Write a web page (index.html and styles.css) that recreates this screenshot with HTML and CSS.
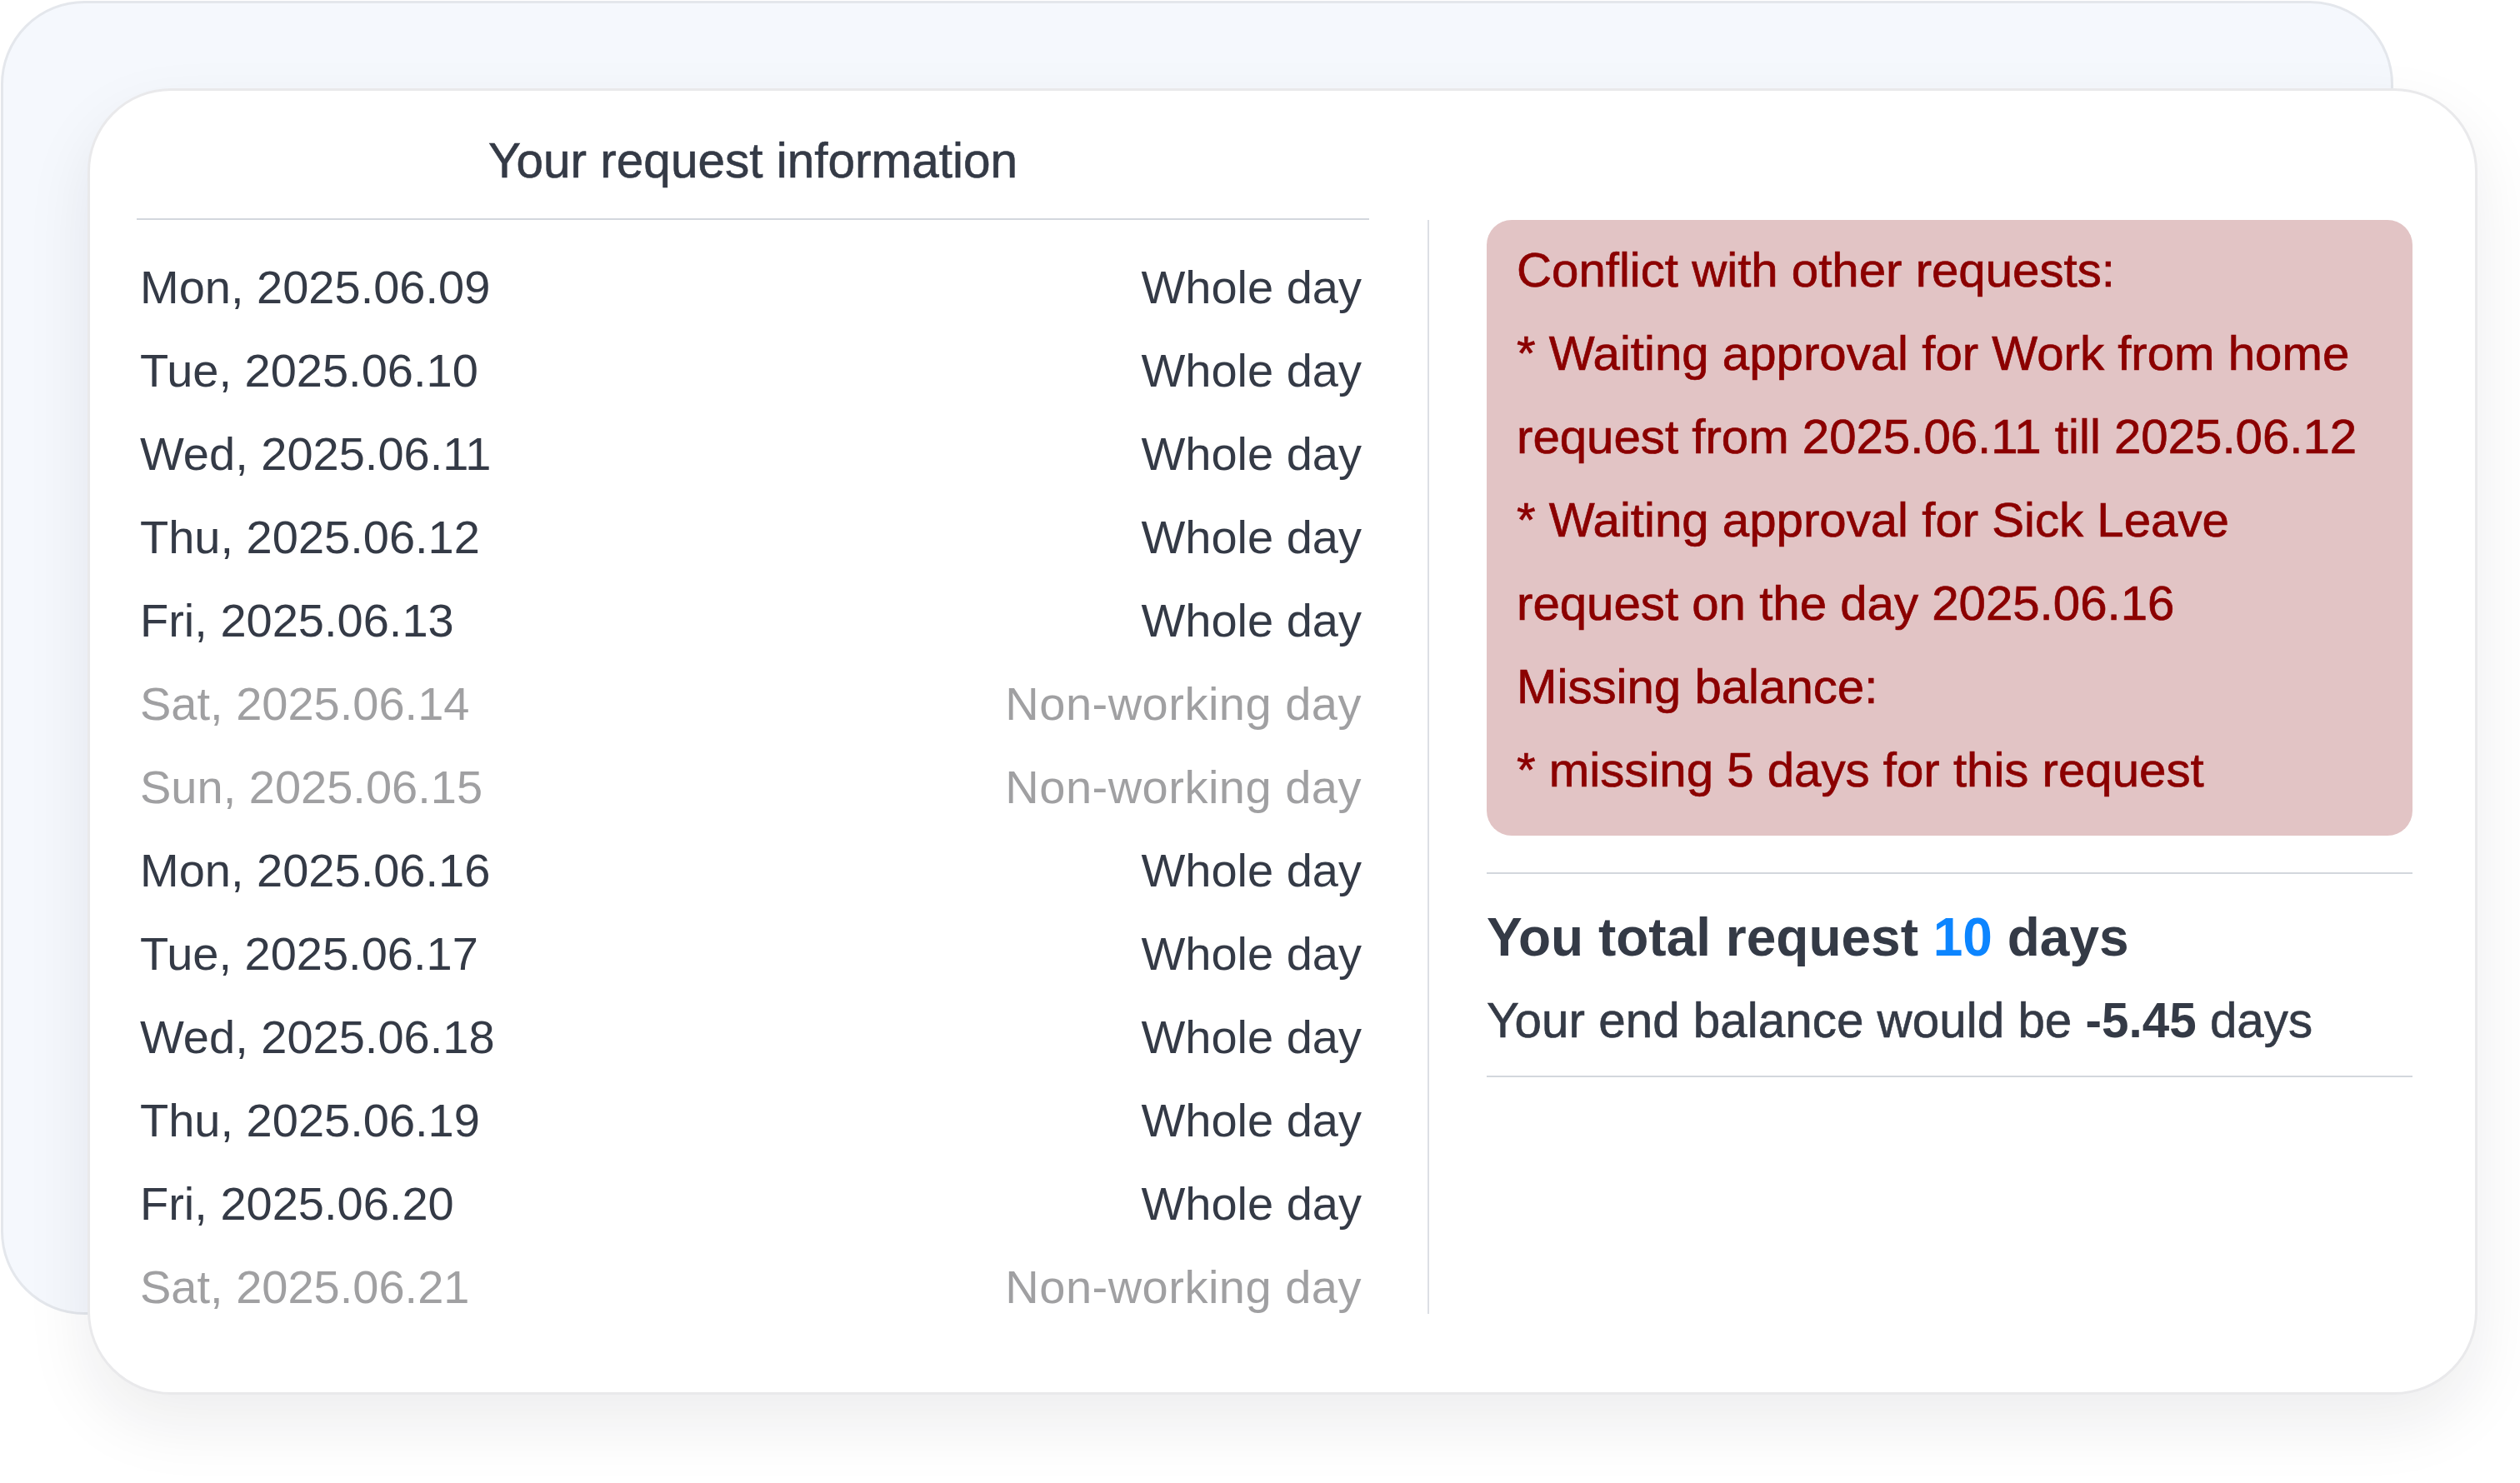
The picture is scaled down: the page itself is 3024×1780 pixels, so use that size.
FILE: index.html
```html
<!DOCTYPE html>
<html>
	<head>
		<meta charset="utf-8">
		<title>Request summary</title>
		<link rel="stylesheet" href="styles.css">
	</head>
	<body>
		<!-- two stacked cards, the white one lies over the blue one -->
		<div class="stack">
			<div class="back"></div>

			<div class="card">
				<div class="head">Your request information</div>

				<div class="body">
					<!-- list of the days in the request -->
					<ul class="days">
						<li class="day"><span>Mon, 2025.06.09</span><span>Whole day</span></li>
						<li class="day"><span>Tue, 2025.06.10</span><span>Whole day</span></li>
						<li class="day"><span>Wed, 2025.06.11</span><span>Whole day</span></li>
						<li class="day"><span>Thu, 2025.06.12</span><span>Whole day</span></li>
						<li class="day"><span>Fri, 2025.06.13</span><span>Whole day</span></li>
						<li class="day off"><span>Sat, 2025.06.14</span><span>Non-working day</span></li>
						<li class="day off"><span>Sun, 2025.06.15</span><span>Non-working day</span></li>
						<li class="day"><span>Mon, 2025.06.16</span><span>Whole day</span></li>
						<li class="day"><span>Tue, 2025.06.17</span><span>Whole day</span></li>
						<li class="day"><span>Wed, 2025.06.18</span><span>Whole day</span></li>
						<li class="day"><span>Thu, 2025.06.19</span><span>Whole day</span></li>
						<li class="day"><span>Fri, 2025.06.20</span><span>Whole day</span></li>
						<li class="day off"><span>Sat, 2025.06.21</span><span>Non-working day</span></li>
					</ul>

					<div class="rule"></div>

					<div class="side">
						<!-- warnings -->
						<div class="alert">
							<div>Conflict with other requests:</div>
							<div>* Waiting approval for Work from home request from 2025.06.11 till 2025.06.12</div>
							<div>* Waiting approval for Sick Leave request on the day 2025.06.16</div>
							<div>Missing balance:</div>
							<div>* missing 5 days for this request</div>
						</div>

						<div class="total">
							<div class="total-title">You total request <span class="num">10</span> days</div>
							<div class="total-balance">Your end balance would be <b>-5.45</b> days</div>
						</div>
					</div>
				</div>
			</div>
		</div>
	</body>
</html>
```

FILE: styles.css
```css
*{
	margin: 0;
	padding: 0;
	box-sizing: border-box;
}

body{
	background-color: #fff;
	font-family: "Liberation Sans", Arial, sans-serif;
	color: #343a46;
}

/* both cards sit in the same grid cell */
.stack{
	display: grid;
	align-items: start;
	/* room below for the card shadow */
	padding: 1px 0 106px 1px;
}
.back,
.card{
	grid-area: 1 / 1;
}

.back{
	width: 2871px;
	height: 1577px;
	background-color: #f5f8fd;
	border: 3px solid #e4e7ec;
	border-radius: 100px;
}

.card{
	/* moved down and right so it overlaps the blue card */
	margin: 105px 0 0 104px;
	width: 2868px;
	height: 1568px;
	background-color: #fff;
	border: 3px solid #e9e9eb;
	border-radius: 100px;
	box-shadow: 0 34px 80px rgba(20, 24, 40, 0.08);
	padding: 50px 75px 94px 56px;
	position: relative;
}

.head{
	width: 1479px;
	text-align: center;
	font-size: 58.5px;
	line-height: 68px;
	padding-bottom: 35px;
	border-bottom: 2px solid #d3d7dd;
	-webkit-text-stroke: 0.6px #343a46;
}

.body{
	display: flex;
}

/* days */
.days{
	list-style: none;
	flex: 0 0 1479px;
	padding: 49px 9px 0 4px;
	display: flex;
	flex-direction: column;
	gap: 36px;
}
.day{
	display: flex;
	justify-content: space-between;
	font-size: 56px;
	line-height: 64px;
}
.day.off{
	color: #a0a0a2;
}
.day.off span:last-child{
	letter-spacing: 0.5px;
}

.rule{
	flex: 0 0 2px;
	background-color: #dcdfe4;
	margin: 0 69px 0 70px;
}

.side{
	flex: 1;
}

/* red box */
.alert{
	background-color: #e2c4c5;
	color: #8b0000;
	border-radius: 30px;
	padding: 10px 40px 29px 36px;
	font-size: 58.2px;
	line-height: 100px;
	-webkit-text-stroke: 0.7px #8b0000;
}

.total{
	margin-top: 44px;
	border-top: 2px solid #d3d7dd;
	border-bottom: 2px solid #d3d7dd;
	padding: 40px 0 34px;
}
.total-title{
	font-size: 64px;
	line-height: 72px;
	font-weight: bold;
}
.num{
	color: #0c85ff;
}
.total-balance{
	margin-top: 32px;
	font-size: 58.4px;
	line-height: 64px;
	-webkit-text-stroke: 0.6px #343a46;
}
.total-balance b{
	font-weight: bold;
	-webkit-text-stroke: 0;
}
```
